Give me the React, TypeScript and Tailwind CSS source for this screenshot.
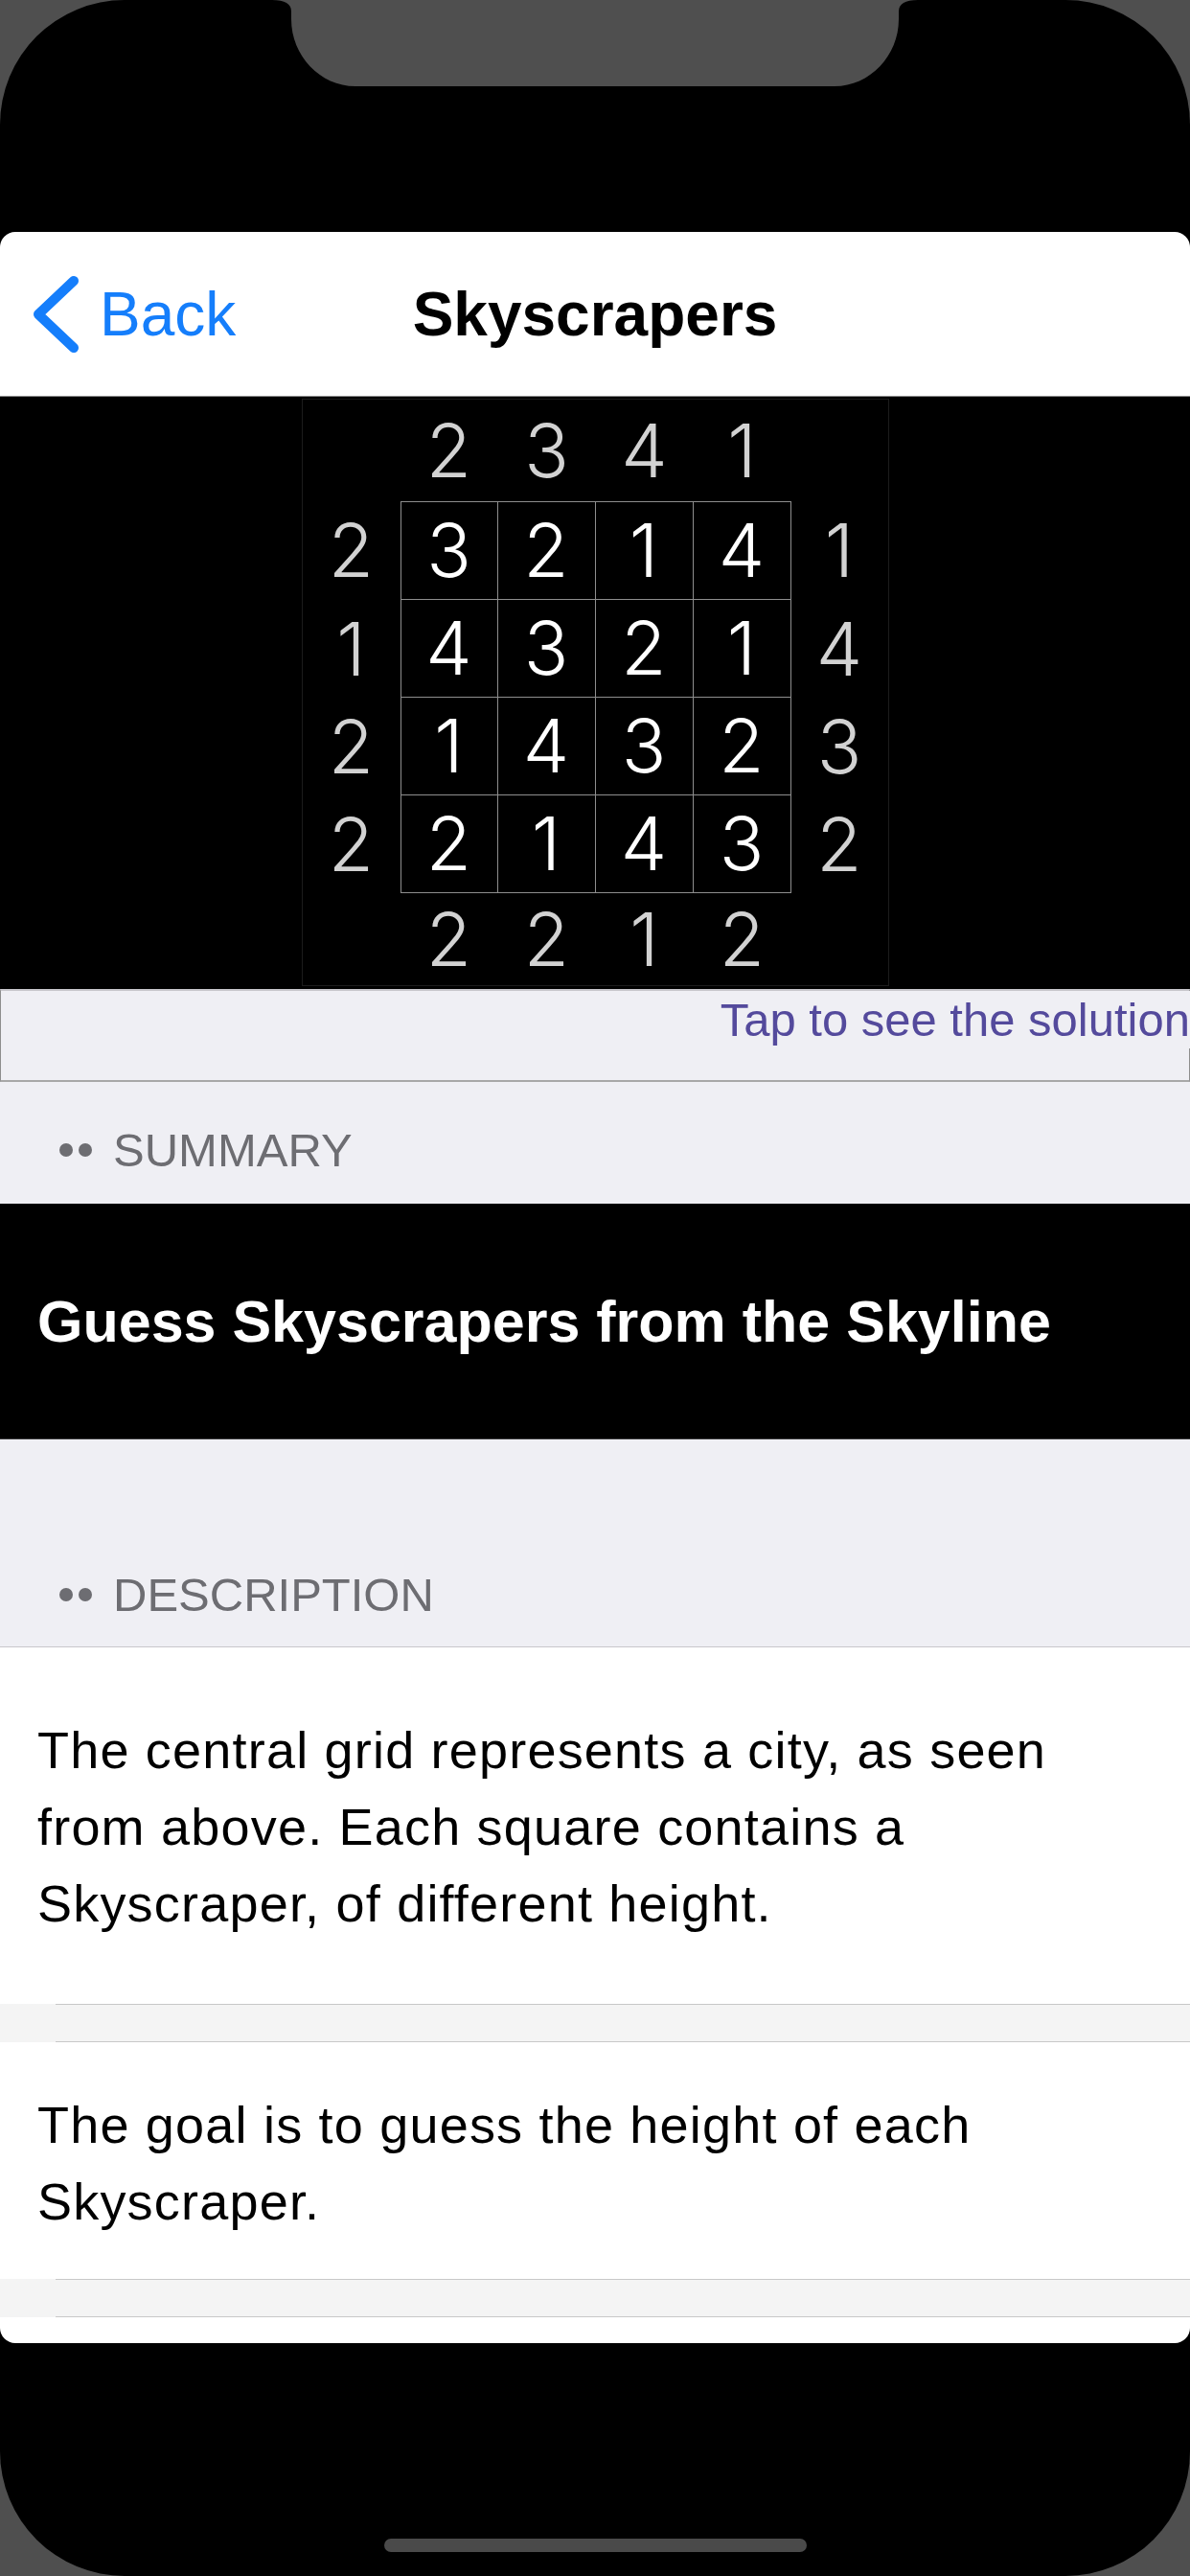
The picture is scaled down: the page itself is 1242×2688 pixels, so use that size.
const clueTop = [2, 3, 4, 1];
const clueBottom = [2, 2, 1, 2];
const clueLeft = [2, 1, 2, 2];
const clueRight = [1, 4, 3, 2];
const solution = [
  [3, 2, 1, 4],
  [4, 3, 2, 1],
  [1, 4, 3, 2],
  [2, 1, 4, 3],
];

function SectionHeader({ label }: { label: string }) {
  return (
    <div className="flex items-center pl-[62px] leading-[56px] text-[49px] text-[#6d6d72]">
      <span className="flex gap-[6px] mr-[22px]">
        <span className="w-[14px] h-[14px] rounded-full bg-[#6d6d72]" />
        <span className="w-[14px] h-[14px] rounded-full bg-[#6d6d72]" />
      </span>
      <span>{label}</span>
    </div>
  );
}

function Separator() {
  return (
    <div className="h-[40px] bg-[#f4f4f4]">
      <div className="ml-[58px] h-full border-y border-[#c8c8c8]" />
    </div>
  );
}

function Puzzle() {
  return (
    <div className="h-[618px] bg-black pt-[2px] flex justify-center font-['Inter',sans-serif] font-light text-[77px] leading-none">
      <div className="w-[613px] h-[613px] border border-[#1c1c1c] flex flex-col">
        {/* top clues */}
        <div className="h-[106px] flex pl-[102px]">
          {clueTop.map((n, i) => (
            <div key={i} className="w-[102px] flex items-center justify-center text-[#d2d2d2]">
              {n}
            </div>
          ))}
        </div>
        {solution.map((row, r) => (
          <div key={r} className="flex">
            <div className="w-[102px] flex items-center justify-center text-[#d2d2d2]">{clueLeft[r]}</div>
            {row.map((n, c) => (
              <div
                key={c}
                className={
                  "w-[102px] h-[102px] flex items-center justify-center text-white border-r border-b border-[#8e8e8e]" +
                  (c === 0 ? " border-l" : "") +
                  (r === 0 ? " border-t h-[103px]" : "")
                }
              >
                {n}
              </div>
            ))}
            <div className="flex-1 flex items-center justify-center text-[#d2d2d2]">{clueRight[r]}</div>
          </div>
        ))}
        {/* bottom clues */}
        <div className="flex-1 flex pl-[102px]">
          {clueBottom.map((n, i) => (
            <div key={i} className="w-[102px] flex items-center justify-center text-[#d2d2d2]">
              {n}
            </div>
          ))}
        </div>
      </div>
    </div>
  );
}

export default function App() {
  return (
    <div className="w-[1242px] h-[2688px] bg-[#4f4f4f] font-['Liberation_Sans',Arial,sans-serif]">
      <div className="w-full h-full bg-black rounded-[130px] flex flex-col overflow-hidden">
        {/* status area with notch */}
        <div className="h-[242px] flex justify-center shrink-0">
          <svg width="674" height="90" viewBox="0 0 674 90">
            <path
              d="M0 0 Q20 0 20 12 L20 20 C20 58 50 90 87 90 L587 90 C624 90 654 58 654 20 L654 12 Q654 0 674 0 Z"
              fill="#4f4f4f"
            />
          </svg>
        </div>

        {/* screen */}
        <div className="h-[2203px] shrink-0 bg-white rounded-[16px] overflow-hidden flex flex-col">
          {/* nav bar */}
          <div className="h-[172px] shrink-0 border-b border-[#8c8c8c] grid grid-cols-[1fr_auto_1fr] items-center">
            <div className="flex items-center pl-[33px] text-[#157efb]">
              <svg width="50" height="82" viewBox="0 0 50 82">
                <polyline
                  points="44,6 7,41 44,76"
                  fill="none"
                  stroke="#157efb"
                  strokeWidth="10"
                  strokeLinecap="round"
                  strokeLinejoin="round"
                />
              </svg>
              <span className="ml-[21px] text-[64px] leading-none">Back</span>
            </div>
            <div className="text-[64px] font-bold leading-none text-black">Skyscrapers</div>
            <div />
          </div>

          <Puzzle />

          {/* tap to see solution */}
          <div className="h-[97px] shrink-0 bg-[#efeff4] border-t-2 border-t-[#c8c7cc] border-l border-r border-b-2 border-l-[#8e8e8e] border-r-[#8e8e8e] border-b-[#a8a8a8] flex justify-end items-start">
            <span className="-mr-[1px] bg-[#efeff4] text-[49px] leading-[60px] text-[#544a9c]">
              Tap to see the solution
            </span>
          </div>

          {/* summary header */}
          <div className="h-[127px] shrink-0 bg-[#efeff4] pt-[43px]">
            <SectionHeader label="SUMMARY" />
          </div>

          {/* title band */}
          <div className="h-[246px] shrink-0 bg-black flex items-center pl-[39px] border-b border-[#3a3a3c]">
            <span className="text-white font-bold text-[61px] leading-[70px]">
              Guess Skyscrapers from the Skyline
            </span>
          </div>

          {/* description header */}
          <div className="h-[217px] shrink-0 bg-[#efeff4] border-b border-[#c8c7cc] flex flex-col justify-end pb-[26px]">
            <SectionHeader label="DESCRIPTION" />
          </div>

          {/* description cells */}
          <div className="h-[372px] shrink-0 pt-[67px] pl-[39px] text-[54px] leading-[80px] tracking-[1.2px] text-black">
            <div>The central grid represents a city, as seen</div>
            <div>from above. Each square contains a</div>
            <div>Skyscraper, of different height.</div>
          </div>
          <Separator />
          <div className="h-[247px] shrink-0 pt-[46px] pl-[39px] text-[54px] leading-[80px] tracking-[1.2px] text-black">
            <div>The goal is to guess the height of each</div>
            <div>Skyscraper.</div>
          </div>
          <Separator />
          <div className="flex-1" />
        </div>

        {/* home indicator */}
        <div className="flex-1 flex flex-col justify-end items-center pb-[25px]">
          <div className="w-[441px] h-[14px] rounded-full bg-[#4a4a4a]" />
        </div>
      </div>
    </div>
  );
}
